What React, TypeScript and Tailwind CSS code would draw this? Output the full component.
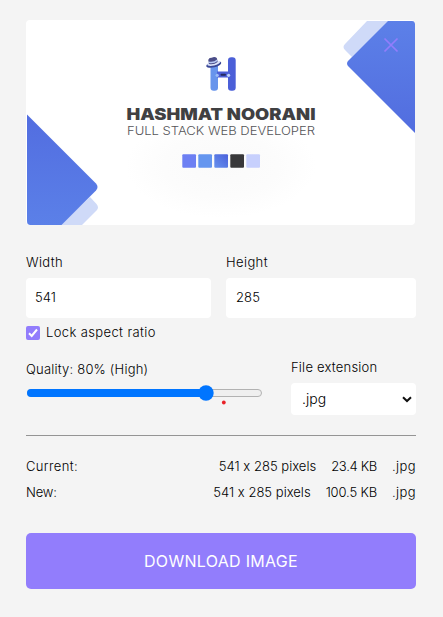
import { useState } from "react";

function Banner() {
  return (
    <svg className="block h-[205px] w-[389px] rounded-[4px] bg-white" viewBox="0 0 389 205">
      <defs>
        <linearGradient id="blueRight" x1="0" y1="0" x2="0" y2="1">
          <stop offset="0" stopColor="#5c80e8" />
          <stop offset="1" stopColor="#526ddf" />
        </linearGradient>
        <linearGradient id="blueLeft" x1="0" y1="0" x2="0" y2="1">
          <stop offset="0" stopColor="#526de0" />
          <stop offset="1" stopColor="#5b80e8" />
        </linearGradient>
        <linearGradient id="swatch" x1="0" y1="1" x2="1" y2="0">
          <stop offset="0" stopColor="#6792ee" />
          <stop offset="1" stopColor="#4a60da" />
        </linearGradient>
        <radialGradient id="glow">
          <stop offset="0" stopColor="#fafafa" />
          <stop offset="0.6" stopColor="#fcfcfc" />
          <stop offset="1" stopColor="#ffffff" />
        </radialGradient>
      </defs>
      <ellipse cx="195" cy="146" rx="95" ry="52" fill="url(#glow)" />
      <path d="M341 1H364L326 37L319 30Q316 27 319 24Z" fill="#cfdaf8" />
      <path d="M362 1H386Q389 1 389 4V113L322 46Q320 43.500 322 41Z" fill="url(#blueRight)" />
      <path d="M64 177L70.500 184Q73.500 187.500 70.500 190.500L56 205H34Z" fill="#cfdaf8" />
      <path d="M1 94.500L70 163.500Q73 167 70 170.500L35.500 205H4Q1 205 1 201Z" fill="url(#blueLeft)" />

      <rect x="184.500" y="41" width="7.500" height="29.700" rx="3.200" fill="#6794ec" />
      <rect x="202" y="37.300" width="7.700" height="33.400" rx="3.200" fill="#4b5fd8" />
      <path d="M191 51.500H203V57.500H191Z" fill="#4c5fd6" />
      <rect x="194.500" y="53.800" width="5.500" height="2" rx="1" fill="#252b5f" />
      <circle cx="191.200" cy="55.300" r="1.600" fill="#9cbcf6" />
      <circle cx="202.600" cy="55.300" r="1.600" fill="#bfd4fa" />
      <g transform="rotate(-13 187.400 43)">
        <ellipse cx="187.400" cy="44.500" rx="7.700" ry="2.900" fill="#394796" />
        <ellipse cx="187.600" cy="43.400" rx="6.600" ry="2.100" fill="#dce4fa" />
        <path d="M183 43V39Q184.500 36.500 187 37.600Q190 36.300 191.800 39V43Q187.500 45 183 43Z" fill="#4b4d88" />
        <path d="M183 40.500Q187.500 42.700 191.800 40.500V42Q187.500 44.300 183 42Z" fill="#b5c8f5" />
      </g>

      <text x="100.500" y="100" textLength="189" lengthAdjust="spacingAndGlyphs" fontSize="16.200" fontWeight="900" fill="#404042" className="font-['Inter',sans-serif]">HASHMAT NOORANI</text>
      <text x="101" y="115.200" textLength="188" lengthAdjust="spacingAndGlyphs" fontSize="11.800" fontWeight="300" fill="#555558" className="font-['Inter',sans-serif]">FULL STACK WEB DEVELOPER</text>

      <rect x="156.300" y="134.200" width="13.700" height="13.600" rx="1" fill="#6d80f3" />
      <rect x="172.300" y="134.200" width="13.700" height="13.600" rx="1" fill="#6596ef" />
      <rect x="188.300" y="134.200" width="13.700" height="13.600" rx="1" fill="url(#swatch)" />
      <rect x="204.300" y="134.200" width="13.700" height="13.600" rx="1" fill="#38383a" />
      <rect x="220.300" y="134.200" width="13.700" height="13.600" rx="1" fill="#c7d0fd" />
      <path d="M358.500 18.500L371.500 31.500M371.500 18.500L358.500 31.500" stroke="#927dfc" strokeWidth="1.700" fill="none" />
    </svg>
  );
}

export default function App() {
  const [width, setWidth] = useState("541");
  const [height, setHeight] = useState("285");
  return (
    <main className="h-[617px] w-[443px] bg-[#f4f4f4] pt-5 pr-[27px] pl-[26px] font-['Inter',sans-serif] text-[13px] leading-5 font-[360] text-black [font-feature-settings:'calt'_0]">
      <Banner />

      <div className="mt-[27px] flex gap-[15px]">
        <label className="block w-[185px]">
          <span className="block tracking-[0.35px]">Width</span>
          <input value={width} onChange={(e) => setWidth(e.target.value)} className="mt-[6px] block h-10 w-full rounded-[4px] bg-white px-[9px] pb-[2px] outline-none" />
        </label>
        <label className="block w-[190px]">
          <span className="block tracking-[0.4px]">Height</span>
          <input value={height} onChange={(e) => setHeight(e.target.value)} className="mt-[6px] block h-10 w-full rounded-[4px] bg-white px-[10px] pb-[2px] tracking-[0.1px] outline-none" />
        </label>
      </div>

      <div className="mt-[4px] flex h-5 items-center">
        <span className="mt-px flex size-[14px] items-center justify-center rounded-[2px] bg-[#927dfc]">
          <svg className="size-[14px]" viewBox="0 0 14 14">
            <path d="M3 7.300L5.700 10L11 3.500" stroke="white" strokeWidth="2" fill="none" />
          </svg>
        </span>
        <span className="ml-[6px] tracking-[0.38px]">Lock aspect ratio</span>
      </div>

      <div className="mt-[15px] flex h-[58px] justify-between">
        <div className="w-[237px] pt-[2px]">
          <div className="tracking-[0.2px]">Quality: 80% (High)</div>
          <svg className="mt-[4px] block h-[28px] w-[237px]" viewBox="0 0 237 28">
            <rect x="1.500" y="6.500" width="234" height="7" rx="3.500" fill="#efefef" stroke="#b2b2b2" />
            <rect x="1" y="6" width="182" height="8" rx="4" fill="#0075ff" />
            <circle cx="180" cy="10" r="7.700" fill="#0075ff" />
            <circle cx="197.800" cy="19.500" r="1.900" fill="#e82127" />
          </svg>
        </div>
        <div className="w-[125px]">
          <div className="tracking-[0.22px]">File extension</div>
          <div className="mt-[6px] flex h-8 items-center justify-between rounded-[4px] bg-white pr-[4px] pl-[11px]">
            <span className="text-[14px]">.jpg</span>
            <svg className="h-[7px] w-[10px]" viewBox="0 0 10 7">
              <path d="M1 1.200L5 5L9 1.200" stroke="#101010" strokeWidth="2" fill="none" />
            </svg>
          </div>
        </div>
      </div>

      <hr className="mt-5 border-t border-[#949494]" />

      <div className="mt-[20px] flex h-5 justify-between">
        <span className="tracking-[0.35px]">Current:</span>
        <div className="flex gap-[15px]"><span className="tracking-[0.02px]">541 x 285 pixels</span><span className="tracking-[-0.3px]">23.4 KB</span><span className="tracking-[0.4px]">.jpg</span></div>
      </div>
      <div className="mt-[6px] flex h-5 justify-between">
        <span className="tracking-[-0.2px]">New:</span>
        <div className="flex gap-[15px]"><span className="tracking-[0.02px]">541 x 285 pixels</span><span className="tracking-[-0.15px]">100.5 KB</span><span className="tracking-[0.4px]">.jpg</span></div>
      </div>

      <button className="mt-[31px] block h-14 w-full rounded-[5px] bg-[#927dfc] text-base font-normal tracking-[0.3px] text-white">DOWNLOAD IMAGE</button>
    </main>
  );
}
